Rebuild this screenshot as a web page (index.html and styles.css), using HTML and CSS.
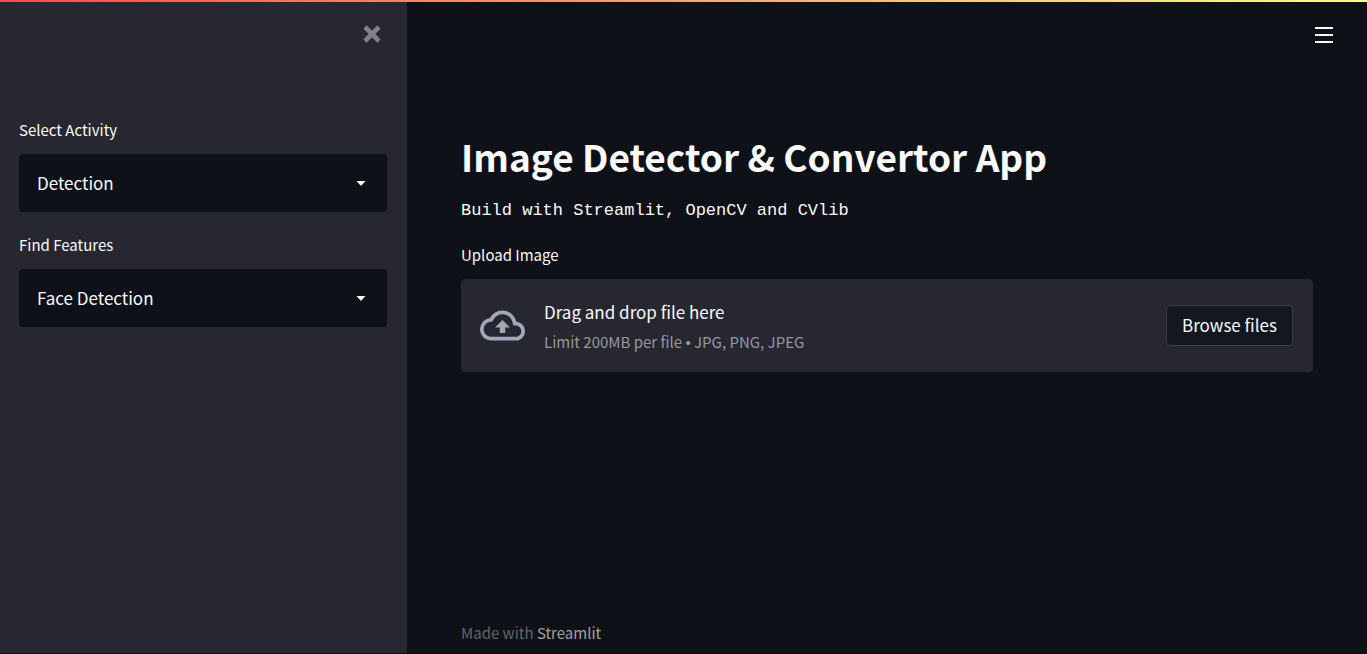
FILE: index.html
```html
<!DOCTYPE html>
<html lang="en">
<head>
<meta charset="utf-8">
<meta name="viewport" content="width=device-width, initial-scale=1">
<title>Image Detector &amp; Convertor App</title>
<link rel="stylesheet" href="styles.css">
</head>
<body>
<div class="decoration"></div>
<div class="app">
  <aside class="sidebar">
    <div class="sidebar-top">
      <button class="icon-button close" type="button" aria-label="Close sidebar">
        <svg width="18" height="18" viewBox="0 0 18 18" fill="none" stroke="currentColor" stroke-width="4.6"><path d="M2 2l14 14M16 2L2 16"/></svg>
      </button>
    </div>
    <div class="field">
      <label class="label" for="activity">Select Activity</label>
      <div class="select-wrap">
        <select class="select" id="activity"><option>Detection</option></select>
        <svg class="arrow" width="10" height="5" viewBox="0 0 10 5" fill="currentColor"><path d="M.5 0h9L5.7 4.3q-.7.7-1.4 0z"/></svg>
      </div>
    </div>
    <div class="field">
      <label class="label" for="features">Find Features</label>
      <div class="select-wrap">
        <select class="select" id="features"><option>Face Detection</option></select>
        <svg class="arrow" width="10" height="5" viewBox="0 0 10 5" fill="currentColor"><path d="M.5 0h9L5.7 4.3q-.7.7-1.4 0z"/></svg>
      </div>
    </div>
  </aside>
  <div class="page">
    <header class="toolbar">
      <button class="icon-button menu" type="button" aria-label="Main menu">
        <svg width="18" height="16" viewBox="0 0 18 16" fill="currentColor"><path d="M0 0h18v2H0zM0 7h18v2H0zM0 14h18v2H0z"/></svg>
      </button>
    </header>
    <main class="content">
      <h1 class="title">Image Detector &amp; Convertor App</h1>
      <p class="subtitle">Build with Streamlit, OpenCV and CVlib</p>
      <span class="label" id="upload-label">Upload Image</span>
      <section class="dropzone" aria-labelledby="upload-label">
        <svg class="cloud" width="45" height="45" viewBox="0 0 24 24" fill="currentColor"><path d="M19.35 10.04A7.49 7.49 0 0 0 12 4C9.11 4 6.6 5.64 5.35 8.04A5.994 5.994 0 0 0 0 14c0 3.31 2.69 6 6 6h13c2.76 0 5-2.24 5-5 0-2.64-2.05-4.78-4.65-4.96zM19 18H6c-2.21 0-4-1.79-4-4 0-2.05 1.53-3.76 3.56-3.97l1.07-.11.5-.95A5.469 5.469 0 0 1 12 6c2.62 0 4.88 1.86 5.39 4.43l.3 1.5 1.53.11A2.98 2.98 0 0 1 22 15c0 1.65-1.35 3-3 3zM8 13h2.55v3h2.9v-3H16l-4-4z"/></svg>
        <div class="instructions">
          <span class="prompt">Drag and drop file here</span>
          <span class="limit">Limit 200MB per file <span class="bullet">•</span> JPG, PNG, JPEG</span>
        </div>
        <button class="browse" type="button">Browse files</button>
      </section>
    </main>
    <footer class="footer">Made with <a class="footer-link" href="#">Streamlit</a></footer>
  </div>
</div>
</body>
</html>
```
FILE: styles.css
```css
* {
  box-sizing: border-box;
}

body {
  margin: 0;
  min-height: 100vh;
  display: flex;
  flex-direction: column;
  background: #0e1117;
  color: #fafafa;
  font-family: "Noto Sans CJK SC", "Noto Sans", sans-serif;
  font-size: 17px;
  line-height: 24px;
}

.decoration {
  height: 2px;
  background: linear-gradient(90deg, #ff4b4b, #fffd80);
}

.app {
  flex: 1;
  display: flex;
  border-bottom: 1px solid #100c16;
}

.sidebar {
  flex: 0 0 407px;
  padding: 0 20px 0 19px;
  background: #262730;
}

.sidebar-top {
  display: flex;
  justify-content: flex-end;
  height: 116px;
  padding: 23px 6px 0 0;
}

.icon-button {
  display: flex;
  align-self: flex-start;
  padding: 0;
  border: 0;
  background: none;
  color: #fafafa;
}

.close {
  color: #808086;
}

.field {
  margin-bottom: 21px;
}

.label {
  display: block;
  margin-bottom: 12px;
  font-size: 15px;
  line-height: 24px;
}

.select-wrap {
  position: relative;
}

.select {
  display: block;
  width: 100%;
  height: 58px;
  padding: 0 40px 1px 18px;
  appearance: none;
  border: 0;
  border-radius: 4px;
  background: #0e1117;
  color: inherit;
  font: inherit;
}

.arrow {
  position: absolute;
  right: 21px;
  top: 27px;
  pointer-events: none;
}

.page {
  flex: 1;
  display: flex;
  flex-direction: column;
  min-width: 0;
  padding: 0 54px;
}

.toolbar {
  display: flex;
  justify-content: flex-end;
  height: 126px;
  margin-right: -20px;
  padding-top: 25px;
}

.content {
  flex: 1;
}

.title {
  margin: 0 0 15px;
  font-size: 37px;
  line-height: 56px;
  font-weight: 700;
}

.subtitle {
  margin: 0 0 20px;
  font-family: "Liberation Mono", monospace;
  font-size: 17px;
  line-height: 24px;
}

.dropzone {
  display: flex;
  align-items: center;
  min-height: 93px;
  padding: 16px 20px 16px 19px;
  border-radius: 4px;
  background: #262730;
}

.cloud {
  flex: none;
  margin-right: 19px;
  color: #a3a8b8;
}

.instructions {
  display: flex;
  flex: 1;
  flex-direction: column;
  gap: 6px;
  padding-top: 4px;
}

.limit {
  color: #98989d;
  font-size: 15px;
}

.bullet {
  font-family: "Liberation Sans", sans-serif;
}

.browse {
  height: 41px;
  padding: 0 15px 1px;
  border: 1px solid #3c3d45;
  border-radius: 4px;
  background: #13171f;
  color: inherit;
  font: inherit;
}

.footer {
  padding-bottom: 8px;
  color: #63656a;
  font-size: 15px;
}

.footer-link {
  color: #a0a1a4;
  text-decoration: none;
}
```
